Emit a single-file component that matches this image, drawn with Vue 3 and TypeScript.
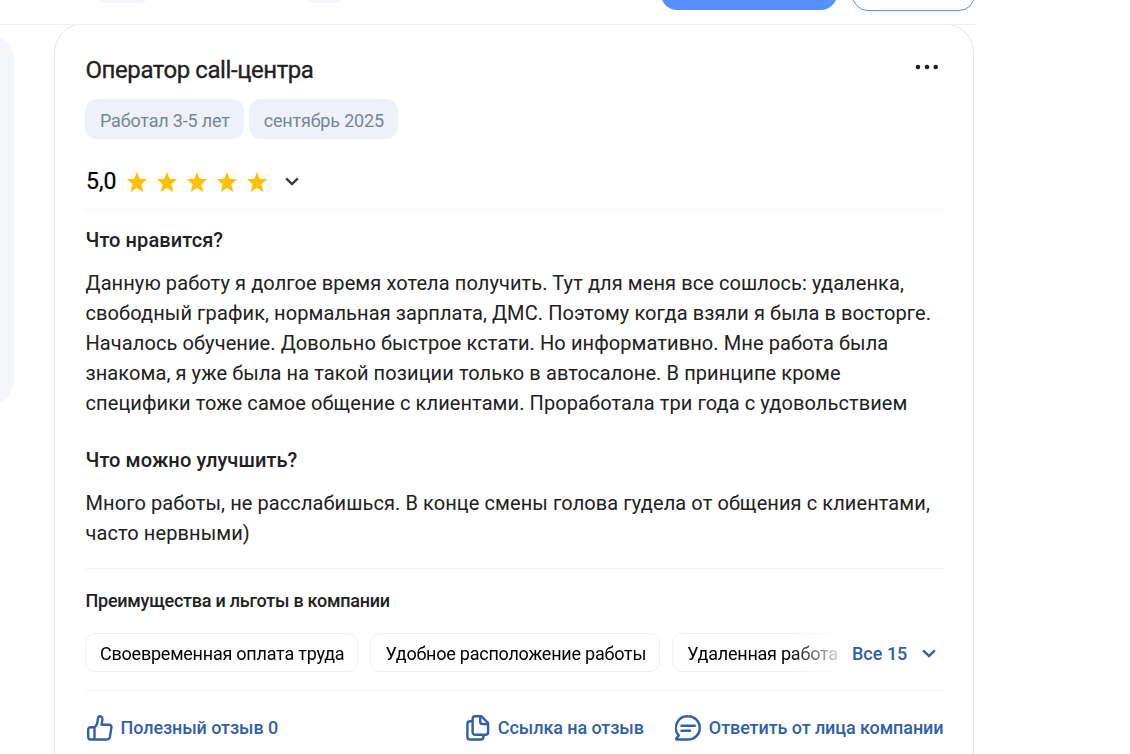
<script setup lang="ts">
interface Section {
  title: string
  text: string
}

const tags: string[] = ['Работал 3-5 лет', 'сентябрь 2025']

const sections: Section[] = [
  {
    title: 'Что нравится?',
    text: `Данную работу я долгое время хотела получить. Тут для меня все сошлось: удаленка,
свободный график, нормальная зарплата, ДМС. Поэтому когда взяли я была в восторге.
Началось обучение. Довольно быстрое кстати. Но информативно. Мне работа была
знакома, я уже была на такой позиции только в автосалоне. В принципе кроме
специфики тоже самое общение с клиентами. Проработала три года с удовольствием`,
  },
  {
    title: 'Что можно улучшить?',
    text: `Много работы, не расслабишься. В конце смены голова гудела от общения с клиентами,
часто нервными)`,
  },
]

const benefits: string[] = ['Своевременная оплата труда', 'Удобное расположение работы', 'Удаленная работа']
</script>

<template>
  <div class="page">
    <header class="topbar">
      <div class="stub stub-wide"></div>
      <div class="stub stub-narrow"></div>
      <div class="btn btn-primary"></div>
      <div class="btn btn-outline"></div>
    </header>

    <div class="content">
      <aside class="sidebar"></aside>

      <article class="card">
        <div class="card-head">
          <h2 class="position">Оператор call-центра</h2>
          <svg class="more" width="24" height="6" viewBox="0 0 24 6">
            <circle cx="3" cy="3" r="2.3" />
            <circle cx="12" cy="3" r="2.3" />
            <circle cx="20.7" cy="3" r="2.3" />
          </svg>
        </div>

        <div class="tags">
          <span v-for="tag in tags" :key="tag" class="tag">{{ tag }}</span>
        </div>

        <div class="rating">
          <span class="score">5,0</span>
          <svg v-for="n in 5" :key="n" class="star" width="20" height="20" viewBox="0 0 20 20">
            <path d="M10 0l2.700 6.800 7.300.5-5.600 4.900 1.900 7.700L10 15.800l-6.300 4.100 1.900-7.700L0 7.300 7.300 6.800z" />
          </svg>
          <svg class="chevron" width="14" height="9" viewBox="0 0 14 9">
            <path d="M1.200 1.300L7 7l5.800-5.700" />
          </svg>
        </div>

        <section v-for="s in sections" :key="s.title" class="section">
          <h3 class="section-title">{{ s.title }}</h3>
          <p class="section-text">{{ s.text }}</p>
        </section>

        <div class="benefits">
          <h4 class="benefits-title">Преимущества и льготы в компании</h4>
          <div class="benefits-row">
            <div class="benefits-list">
              <span v-for="b in benefits" :key="b" class="benefit">{{ b }}</span>
            </div>
            <a class="show-all">
              <span>Все 15</span>
              <svg class="chevron" width="14" height="9" viewBox="0 0 14 9">
                <path d="M1.200 1.300L7 7l5.800-5.700" />
              </svg>
            </a>
          </div>
        </div>

        <footer class="actions">
          <a class="action useful">
            <svg width="26" height="26" viewBox="0 0 26 26">
              <path d="M7.500 12.200V24.500M3.600 12.200h3.900c1.700-1 3-4.300 3.300-7.800.2-2.100.9-3.200 2.200-3.200 1.600 0 2.600 1.500 2.400 3.400l-.8 5.200h7.500c1.600 0 2.600 1.200 2.300 2.800l-1.500 9.300c-.3 1.600-1.400 2.600-3 2.600H3.600c-1.400 0-2.400-1-2.400-2.400v-7.500c0-1.400 1-2.400 2.400-2.400z" />
            </svg>
            <span>Полезный отзыв 0</span>
          </a>
          <a class="action link">
            <svg width="24" height="26" viewBox="0 0 24 26">
              <path d="M9.200 1.300h6.300l6.600 6.700v9.200c0 1.500-1.100 2.600-2.600 2.600H9.200c-1.500 0-2.600-1.100-2.600-2.600V3.900c0-1.500 1.100-2.600 2.600-2.600z" />
              <path d="M14.200 1.600v5.200c0 1.400.8 2.200 2.200 2.200h5.400M6.300 6.200H4.100c-1.600 0-2.700 1.100-2.700 2.700v12.900c0 1.600 1.100 2.700 2.700 2.700h10.600c1.600 0 2.700-1.100 2.700-2.700v-1.700" />
            </svg>
            <span>Ссылка на отзыв</span>
          </a>
          <a class="action reply">
            <svg width="26" height="26" viewBox="0 0 26 26">
              <path d="M13.200 1.300a11.600 11.600 0 1 1 0 23.200H2.100c-.9 0-1.200-.9-.6-1.500l2.300-2.400A11.600 11.600 0 0 1 13.200 1.300z" />
              <path d="M6.500 10.800h13.300M6.500 15.800h8.500" />
            </svg>
            <span>Ответить от лица компании</span>
          </a>
        </footer>
      </article>
    </div>
  </div>
</template>

<style>
body { margin: 0; background: #fff; }
</style>

<style scoped>
.page {
  width: 1130px; height: 754px; overflow: hidden; background: #fff;
  font-family: Roboto, "Noto Sans", sans-serif; color: #212121;
}
h2, h3, h4, p { margin: 0; }

.topbar {
  display: flex; align-items: flex-start; box-sizing: border-box;
  width: 975px; height: 25px; border-bottom: 1px solid #edeff7;
  background: #fff; position: relative; z-index: 1;
}
.stub { height: 40px; margin-top: -37px; border-radius: 12px; background: #f4f5fb; }
.stub-wide { width: 56px; margin-left: 95px; }
.stub-narrow { width: 42px; margin-left: 153px; }
.btn { box-sizing: border-box; height: 40px; border-radius: 16px; }
.btn-primary { width: 176px; margin: -30px 0 0 315px; background: #5990ff; }
.btn-outline { width: 123px; margin: -29px 0 0 15px; border: 1px solid #5990ff; }

.content { display: flex; align-items: flex-start; }
.sidebar {
  flex: none; width: 44px; height: 368px; margin: 11px 40px 0 -30px;
  border-radius: 30px; background: #f5f6fc;
}
.card {
  flex: none; box-sizing: border-box; width: 920px; height: 800px; margin-top: -2px;
  padding: 31px 29px 0 30px; border: 1px solid #dfe3ee; border-radius: 30px;
}

.card-head { display: flex; justify-content: space-between; height: 30px; }
.position {
  padding-left: 0.5px; font-size: 24px; line-height: 30px; font-weight: 400;
  letter-spacing: -0.42px; -webkit-text-stroke: 0.3px;
}
.more { margin: 9px 5px 0 0; fill: #212121; }

.tags { display: flex; gap: 5px; margin-top: 14px; }
.tag {
  height: 40px; padding: 0 14px 0 15px; border-radius: 12px; background: #eef1f9;
  font-size: 18px; line-height: 43px; letter-spacing: -0.18px; color: #788596; white-space: nowrap;
}

.rating { display: flex; align-items: center; height: 30px; margin-top: 27px; padding-bottom: 13px; border-bottom: 1px solid #f3f4fa; }
.score { width: 31px; margin: 2px 10px 0 1px; font-size: 23px; line-height: 30px; color: #000; -webkit-text-stroke: 0.2px; }
.star { margin: 1px 10px 0 0; fill: #ffc107; }
.chevron { fill: none; stroke: #3c3c3c; stroke-width: 2.4; }
.rating .chevron { margin: 1px 0 0 8px; }

.section { margin-top: 15px; }
.section + .section { margin-top: 27px; }
.section-title { padding-left: 0.5px; font-size: 20px; line-height: 30px; font-weight: 500; letter-spacing: 0.1px; }
.section-text { padding-left: 0.5px; margin-top: 13px; font-size: 20px; line-height: 30px; letter-spacing: 0.09px; white-space: pre; }

.benefits { margin-top: 20px; border-top: 1px solid #f3f4fa; border-bottom: 1px solid #f3f4fa; }
.benefits-title { padding-left: 0.5px; margin-top: 20px; font-size: 18px; line-height: 24px; font-weight: 500; letter-spacing: -0.25px; }
.benefits-row { display: flex; align-items: center; margin: 20px 0 18px; }
.benefits-list {
  display: flex; flex: none; gap: 12px; width: 753px; overflow: hidden;
  mask-image: linear-gradient(to right, #000 705px, transparent 763px);
}
.benefit {
  flex: none; box-sizing: border-box; height: 39px; padding: 0 13px 0 14px;
  border: 1px solid #eef0f8; border-radius: 10px;
  font-size: 18px; line-height: 40px; letter-spacing: -0.23px; color: #000; white-space: nowrap;
}
.show-all { display: flex; align-items: center; margin-left: 14px; padding-top: 2px; color: #315fa8; font-size: 18px; font-weight: 500; }
.show-all .chevron { margin-left: 15px; stroke: #315fa8; }

.actions { display: flex; align-items: center; margin-top: 24px; color: #315fa8; }
.action { display: flex; align-items: center; gap: 8px; font-size: 18px; line-height: 26px; font-weight: 500; letter-spacing: -0.09px; white-space: nowrap; }
.action svg { flex: none; fill: none; stroke: #315fa8; stroke-width: 2.4; stroke-linejoin: round; stroke-linecap: round; }
.useful { margin-left: 1.5px; }
.link { margin-left: auto; }
.reply { margin: 0 0.5px 0 31px; }
</style>
